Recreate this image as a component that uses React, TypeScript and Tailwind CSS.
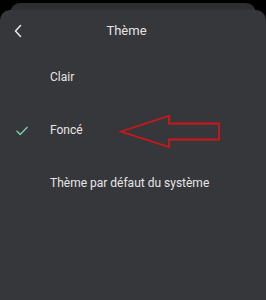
export default function App() {
  return (
    <div className="h-[300px] w-[266px] overflow-hidden bg-black font-['Roboto',sans-serif]">
      <div className="mx-[10px] mt-[3px] h-[12px] rounded-t-[10px] bg-[#2e2f32]" />
      <div className="relative -mt-[5px] h-[292px] rounded-t-[10px] bg-[#36373a]">
        <div className="flex h-[40px] items-center px-[13px] pt-[1px]">
          <svg width="10" height="14" viewBox="0 0 10 14" fill="none">
            <path d="M7.5 1.5 L2.5 7 L7.5 12.5" stroke="#e4e4e4" strokeWidth="1.6" strokeLinecap="round" strokeLinejoin="round" />
          </svg>
          <div className="flex-1 pr-[23px] text-center text-[13px] text-[#e4e4e4]">Thème</div>
        </div>
        <div className="flex flex-col">
          <div className="flex h-[53px] items-center pl-[50px] text-[12px] text-[#e6e6e6]">Clair</div>
          <div className="flex h-[53px] items-center text-[12px] text-[#e6e6e6]">
            <div className="flex w-[50px] pl-[16px] pt-[2px]">
              <svg width="12" height="10" viewBox="0 0 12 10" fill="none">
                <path d="M1 5.2 L4.2 8.4 L11 1.4" stroke="#7cc7a2" strokeWidth="1.5" strokeLinecap="round" strokeLinejoin="round" />
              </svg>
            </div>
            <span>Foncé</span>
          </div>
          <div className="flex h-[53px] items-center pl-[50px] text-[12px] text-[#e6e6e6]">Thème par défaut du système</div>
        </div>
        {/* annotation arrow */}
        <svg className="absolute left-0 top-[-10px]" width="266" height="300" viewBox="0 0 266 300" fill="none">
          <path d="M121 131.5 L169 116 L169 123.5 L219 123.5 L219 139.5 L169 139.5 L169 147 Z" stroke="#d0161c" strokeWidth="1.8" strokeLinejoin="miter" />
        </svg>
      </div>
    </div>
  )
}
